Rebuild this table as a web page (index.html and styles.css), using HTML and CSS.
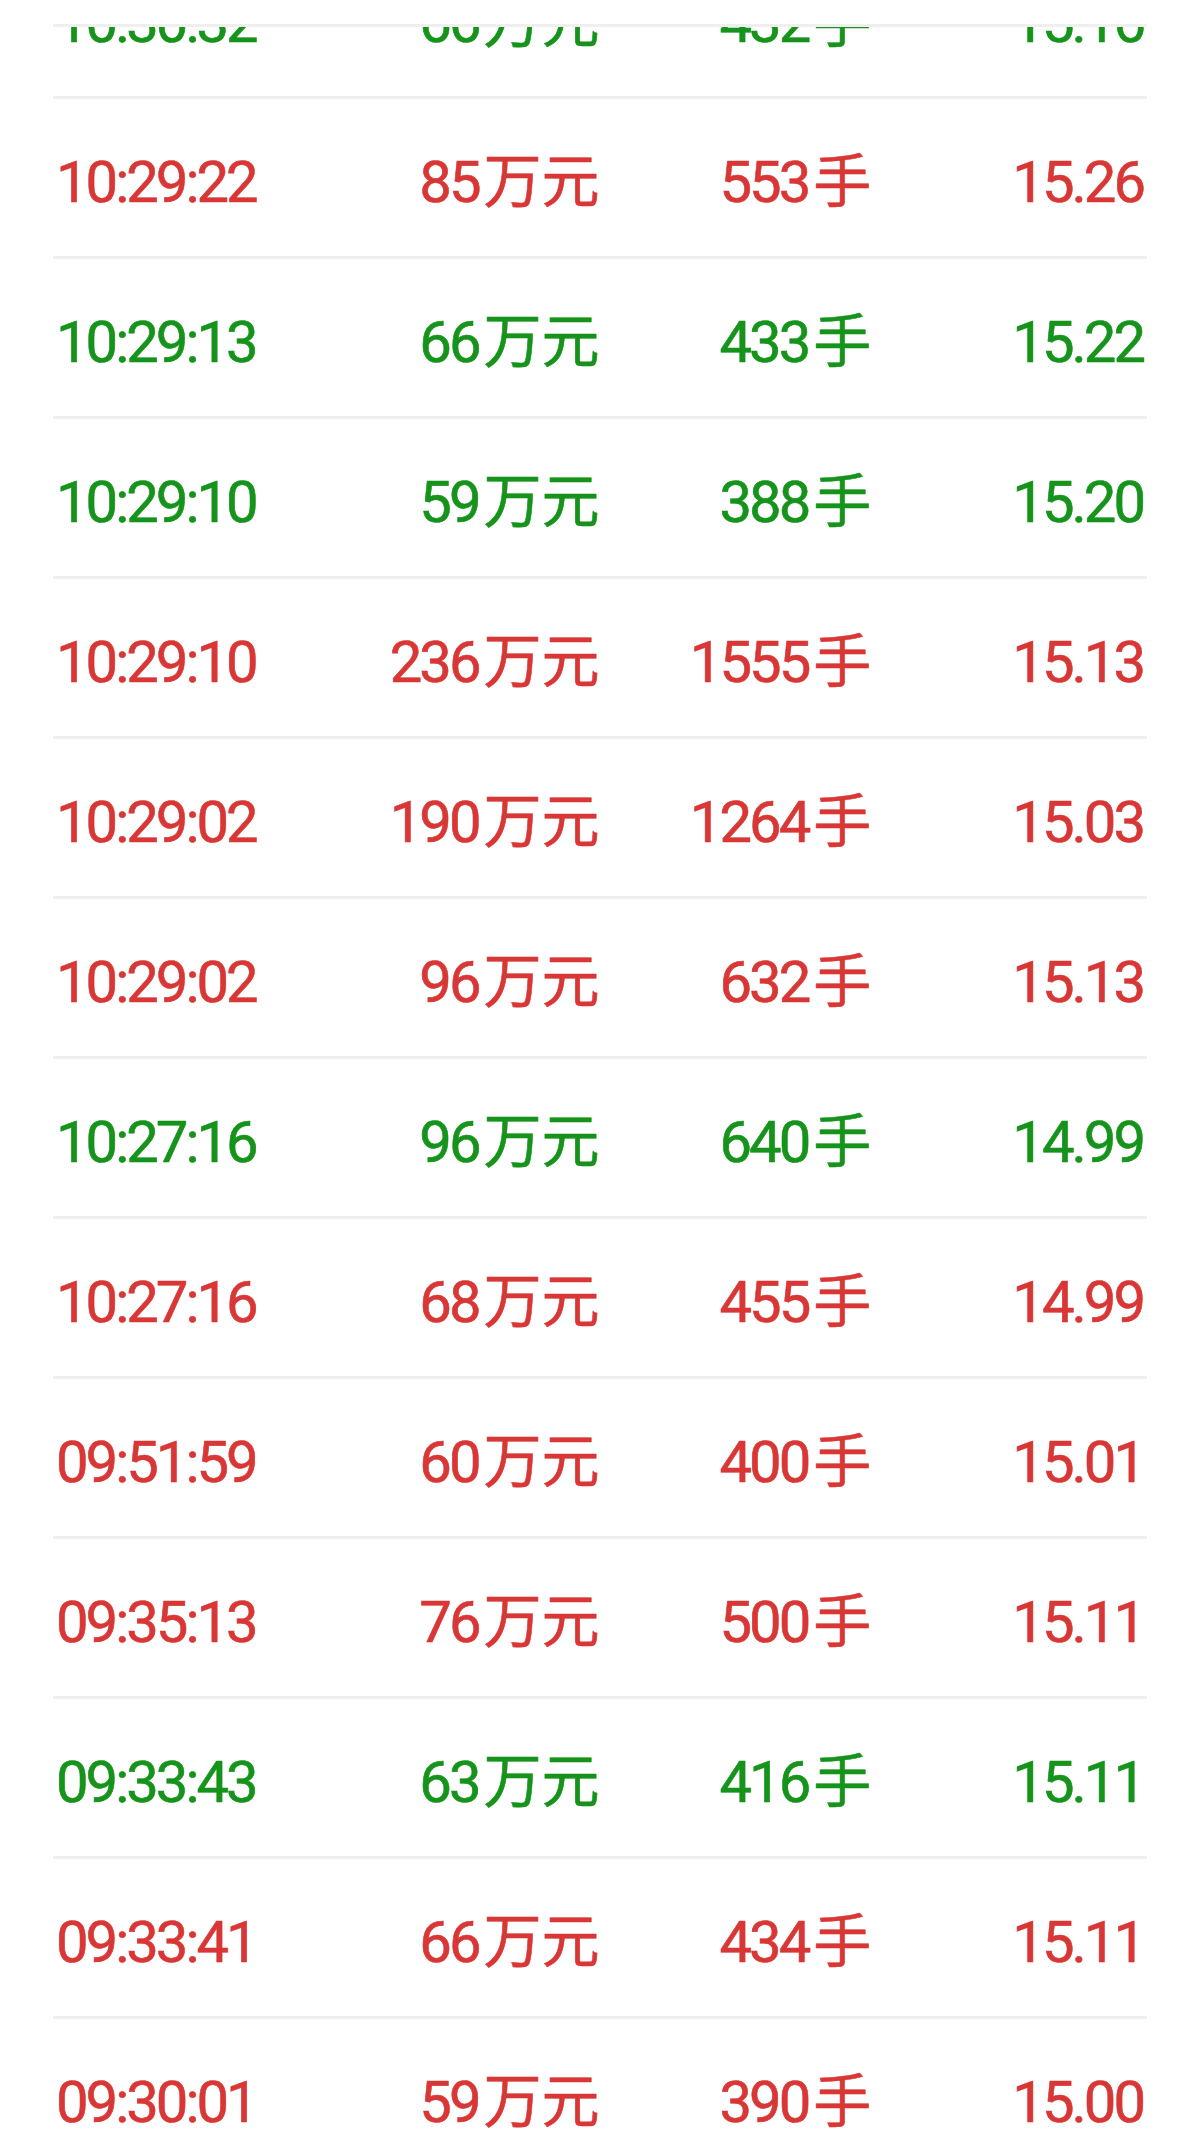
FILE: index.html
```html
<!DOCTYPE html>
<html lang="zh-CN">
<head>
  <meta charset="UTF-8">
  <title>大单成交明细</title>
  <link rel="stylesheet" href="styles.css">
</head>
<body>

<div class="page">
  <div class="top-bar"></div>

  <div class="deal-list">
    <div class="deal-row up first">
      <span>10:30:32</span><span>66<i>万元</i></span><span>432<i>手</i></span><span>15.16</span>
    </div>
    <div class="deal-row down">
      <span>10:29:22</span><span>85<i>万元</i></span><span>553<i>手</i></span><span>15.26</span>
    </div>
    <div class="deal-row up">
      <span>10:29:13</span><span>66<i>万元</i></span><span>433<i>手</i></span><span>15.22</span>
    </div>
    <div class="deal-row up">
      <span>10:29:10</span><span>59<i>万元</i></span><span>388<i>手</i></span><span>15.20</span>
    </div>
    <div class="deal-row down">
      <span>10:29:10</span><span>236<i>万元</i></span><span>1555<i>手</i></span><span>15.13</span>
    </div>
    <div class="deal-row down">
      <span>10:29:02</span><span>190<i>万元</i></span><span>1264<i>手</i></span><span>15.03</span>
    </div>
    <div class="deal-row down">
      <span>10:29:02</span><span>96<i>万元</i></span><span>632<i>手</i></span><span>15.13</span>
    </div>
    <div class="deal-row up">
      <span>10:27:16</span><span>96<i>万元</i></span><span>640<i>手</i></span><span>14.99</span>
    </div>
    <div class="deal-row down">
      <span>10:27:16</span><span>68<i>万元</i></span><span>455<i>手</i></span><span>14.99</span>
    </div>
    <div class="deal-row down">
      <span>09:51:59</span><span>60<i>万元</i></span><span>400<i>手</i></span><span>15.01</span>
    </div>
    <div class="deal-row down">
      <span>09:35:13</span><span>76<i>万元</i></span><span>500<i>手</i></span><span>15.11</span>
    </div>
    <div class="deal-row up">
      <span>09:33:43</span><span>63<i>万元</i></span><span>416<i>手</i></span><span>15.11</span>
    </div>
    <div class="deal-row down">
      <span>09:33:41</span><span>66<i>万元</i></span><span>434<i>手</i></span><span>15.11</span>
    </div>
    <div class="deal-row down">
      <span>09:30:01</span><span>59<i>万元</i></span><span>390<i>手</i></span><span>15.00</span>
    </div>
  </div>
</div>

</body>
</html>
```

FILE: styles.css
```css
* { margin: 0; padding: 0; box-sizing: border-box; }

html, body {
  height: 2152px;
  overflow: hidden;
  background: #fff;
}

body {
  font-family: Roboto, "Noto Sans CJK SC", sans-serif;
  color: #333;
}

.page {
  height: 100%;
  display: flex;
  flex-direction: column;
}

.top-bar {
  height: 27px;
  margin: 0 53px;
  border-bottom: 3px solid #efefef;
  flex-shrink: 0;
}

.deal-list {
  flex: 1;
  overflow: hidden;
  padding: 0 53px;
}

/* Rows */
.deal-row {
  display: grid;
  grid-template-columns: repeat(4, 1fr);
  align-items: center;
  height: 160px;
  padding: 9px 4px 0 3px;
  border-bottom: 3px solid #efefef;
  font-size: 58px;
  font-weight: 400;
  line-height: 1;
  letter-spacing: -3px;
  white-space: nowrap;
  -webkit-text-stroke: 0.6px currentColor;
}

.deal-row.first {
  margin-top: -88px;
}

.deal-row span { text-align: right; }
.deal-row span:first-child { text-align: left; }

/* unit after the number (万元 / 手) */
.deal-row i {
  font-style: normal;
  letter-spacing: 0;
  margin-left: 5px;
}

.deal-row.up { color: #15931b; }
.deal-row.down { color: #d93636; }
```
